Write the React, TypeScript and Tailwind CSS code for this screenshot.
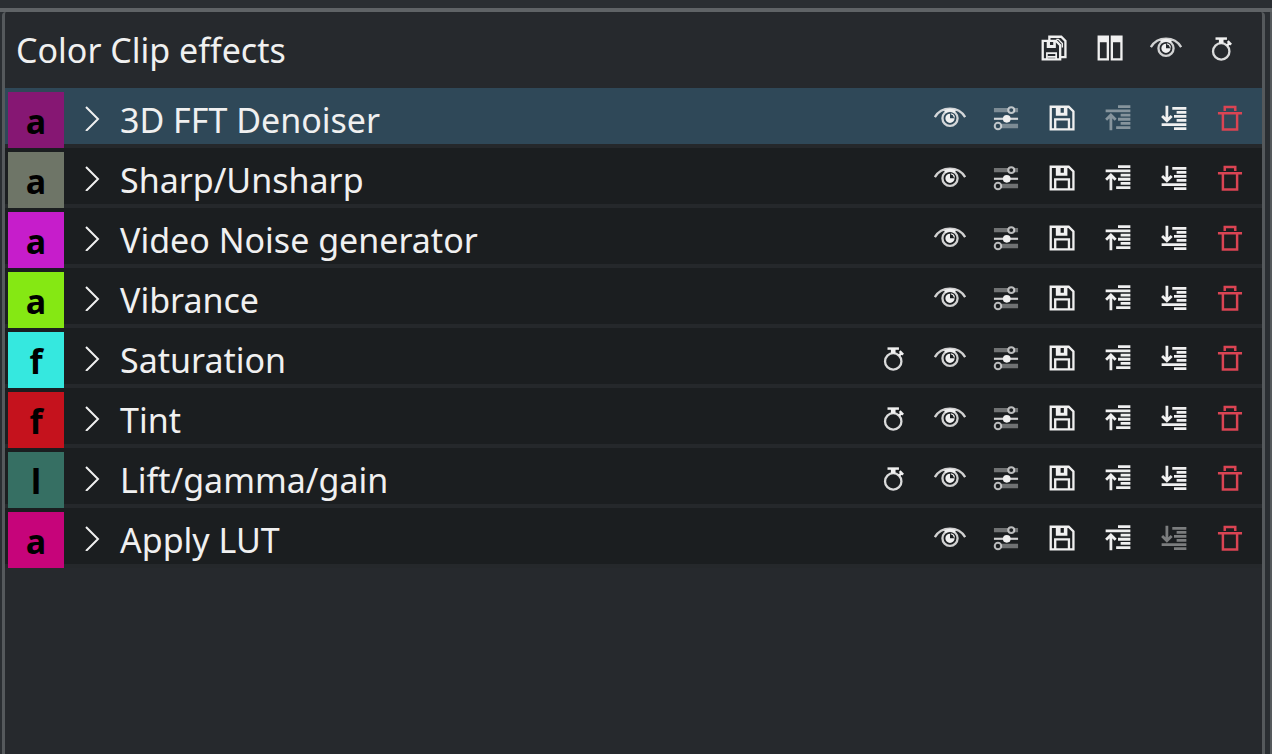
import React, { useState } from 'react';

type Effect = {
  name: string;
  letter: string;
  color: string;
  keyframes?: boolean;
};

const effects: Effect[] = [
  { name: '3D FFT Denoiser', letter: 'a', color: 'bg-[#861773]' },
  { name: 'Sharp/Unsharp', letter: 'a', color: 'bg-[#6e7567]' },
  { name: 'Video Noise generator', letter: 'a', color: 'bg-[#c61dcb]' },
  { name: 'Vibrance', letter: 'a', color: 'bg-[#85e813]' },
  { name: 'Saturation', letter: 'f', color: 'bg-[#35e8df]', keyframes: true },
  { name: 'Tint', letter: 'f', color: 'bg-[#c5121d]', keyframes: true },
  { name: 'Lift/gamma/gain', letter: 'l', color: 'bg-[#366f63]', keyframes: true },
  { name: 'Apply LUT', letter: 'a', color: 'bg-[#c6047a]' },
];

const Icon = ({ children }: { children: React.ReactNode }) => (
  <svg viewBox="0 0 22 22" className="w-[34px] h-[34px]" fill="none" stroke="currentColor" aria-hidden="true">
    {children}
  </svg>
);

const EyeIcon = () => (
  <Icon>
    <path d="M1.200 10.400C3.400 6.600 6.800 4.900 11 4.900s7.600 1.700 9.800 5.500" strokeWidth="1.500" opacity=".85" />
    <path d="M7 6.200Q11 3.800 15 6.200L13.800 7.800Q11 6 8.200 7.800Z" fill="currentColor" stroke="none" />
    <circle cx="11" cy="11.200" r="4.900" strokeWidth="1.500" opacity=".85" />
    <path d="M11 8.200a3 3 0 1 0 3 3h-3Z" fill="currentColor" stroke="none" />
    <path d="M11.500 8.300a3 3 0 0 1 2.400 2.400" strokeWidth=".7" />
  </Icon>
);

const StopwatchIcon = () => (
  <Icon>
    <circle cx="10.500" cy="13.200" r="5.300" strokeWidth="1.500" opacity=".9" />
    <path d="M6.800 4.900h7.400" strokeWidth="1.600" />
    <path d="M10.500 5v3" strokeWidth="3" />
    <path d="m14.200 9.400 1.300-1.300M14.700 6.600l2.200 2.200" strokeWidth="1.600" />
  </Icon>
);

const SlidersIcon = () => (
  <Icon>
    <path d="M3.200 5.900h9.300M16.300 5.900h2.500M8 16.200h10.800" strokeWidth="2.800" opacity=".4" />
    <path d="M3.200 11.500h15.600" strokeWidth="1.400" opacity=".85" />
    <circle cx="14.400" cy="5.900" r="1.900" strokeWidth="1.300" opacity=".75" />
    <circle cx="11.500" cy="11.500" r="2.500" fill="currentColor" stroke="none" />
    <circle cx="5.800" cy="16.200" r="2.100" strokeWidth="1.300" opacity=".75" />
  </Icon>
);

const SaveIcon = () => (
  <Icon>
    <path d="M3.700 3.700h11.600l3.100 3.100v11.600H3.700Z" strokeWidth="1.500" />
    <path d="M6.600 18.200v-6.300h8.900v6.300" strokeWidth="1.500" />
    <path d="M7 3.600v5.900h7.500V3.600h-2.300v4h-2.100v-4Z" fill="currentColor" stroke="none" />
  </Icon>
);

const SaveAllIcon = () => (
  <Icon>
    <path d="M3.700 6.400h8.600l2.700 2.800v9.200H3.700Z" strokeWidth="1.500" />
    <path d="M8 6V3.700h7.700l2.700 2.700v10.500h-3" strokeWidth="1.500" />
    <path d="M12.500 5.400h1.300l2.600 2.700v2.500" strokeWidth=".9" />
    <path d="M6.300 6v5h5.900V6h-1.700v3H8.400V6Z" fill="currentColor" stroke="none" />
    <path d="M6.400 18.400v-4.100h6v4.100M7 16.700h5" strokeWidth="1.100" />
  </Icon>
);

const CompareIcon = () => (
  <Icon>
    <path d="M3.700 3.700h5.900v14.700H3.700ZM12.200 3.700h6.200v14.700h-6.200Z" strokeWidth="1.500" />
    <path d="M3.700 5.200h6M12.200 5.200h6.200" strokeWidth="4" />
  </Icon>
);

const MoveUpIcon = () => (
  <Icon>
    <path d="M11 3.700h8M3 6.400h16M12.700 9.100H19M11 11.800h8M12.700 14.500H19M9.800 17.200H19" strokeWidth="1.800" />
    <path d="M6.400 18.900V9M3.300 12.200l3.100-3.100 3.100 3.100" strokeWidth="1.800" />
  </Icon>
);

const MoveDownIcon = () => (
  <Icon>
    <path d="M9.900 4.800H19M12.700 7.400H19M11 10h8M12.700 12.600H19M3 15.300h16M11 17.900h8" strokeWidth="1.800" />
    <path d="M6.400 3v10M3.300 9.700l3.100 3.100 3.100-3.100" strokeWidth="1.800" />
  </Icon>
);

const TrashIcon = () => (
  <Icon>
    <path d="M3.200 7.900h15.600M6.400 7.900v10.500h9.200V7.900" strokeWidth="1.600" />
    <path d="M7.600 6.400V3.900h6.800v2.500" strokeWidth="1.600" />
  </Icon>
);

const ChevronIcon = () => (
  <svg viewBox="0 0 16 26" className="w-4 h-[26px]" fill="none" stroke="currentColor" strokeWidth="2" aria-hidden="true">
    <path d="m2 2 12 12L2 26" />
  </svg>
);

type ToolButtonProps = {
  label: string;
  danger?: boolean;
  disabled?: boolean;
  children: React.ReactNode;
};

const ToolButton = ({ label, danger, disabled, children }: ToolButtonProps) => (
  <button
    type="button"
    aria-label={label}
    title={label}
    disabled={disabled}
    className={`flex w-14 shrink-0 items-center justify-center disabled:opacity-45 ${danger ? 'text-[#da4453]' : 'text-[#f0f0f0]'}`}
  >
    {children}
  </button>
);

const App: React.FC = () => {
  const [selected, setSelected] = useState(0);

  return (
    <div className="flex min-h-screen flex-col bg-[#2a2e32] pt-2 font-['Noto_Sans',sans-serif] text-[34px] leading-10 text-[#f0f0f0]">
      <main className="flex flex-1 border-t-4 border-[#5f6366] pl-0.5">
        <section className="min-w-0 flex-1 rounded-t border-x-[3px] border-[#55595c] bg-[#26292d]">
          <header className="flex h-19 items-center pr-3 pl-[11px]">
            <h1 className="flex-1">Color Clip effects</h1>
            <div className="flex pb-1">
              <ToolButton label="Save effect stack"><SaveAllIcon /></ToolButton>
              <ToolButton label="Split compare"><CompareIcon /></ToolButton>
              <ToolButton label="Toggle all effects"><EyeIcon /></ToolButton>
              <ToolButton label="Show keyframes"><StopwatchIcon /></ToolButton>
            </div>
          </header>

          <ul>
            {effects.map((effect, i) => (
              <li
                key={effect.name}
                onClick={() => setSelected(i)}
                className={`flex h-15 border-b-4 border-[#25282b] pt-1 pr-1 pl-[3px] ${
                  selected === i ? 'bg-[#2f4858]' : 'bg-[#1b1e20]'
                }`}
              >
                <span className={`flex h-14 w-14 shrink-0 items-center justify-center pt-0.5 font-bold text-black ${effect.color}`}>
                  {effect.letter}
                </span>
                <button type="button" aria-label={`Expand ${effect.name}`} className="flex w-14 shrink-0 items-center justify-center">
                  <ChevronIcon />
                </button>
                <span className="flex-1 pt-2">{effect.name}</span>
                <div className="flex">
                  {effect.keyframes && <ToolButton label="Keyframes"><StopwatchIcon /></ToolButton>}
                  <ToolButton label="Toggle effect"><EyeIcon /></ToolButton>
                  <ToolButton label="Presets"><SlidersIcon /></ToolButton>
                  <ToolButton label="Save effect"><SaveIcon /></ToolButton>
                  <ToolButton label="Move up" disabled={i === 0}><MoveUpIcon /></ToolButton>
                  <ToolButton label="Move down" disabled={i === effects.length - 1}><MoveDownIcon /></ToolButton>
                  <ToolButton label="Delete effect" danger><TrashIcon /></ToolButton>
                </div>
              </li>
            ))}
          </ul>
        </section>
        <div className="ml-[5px] w-0.5 bg-[#55595c]" />
      </main>
    </div>
  );
};

export default App;
